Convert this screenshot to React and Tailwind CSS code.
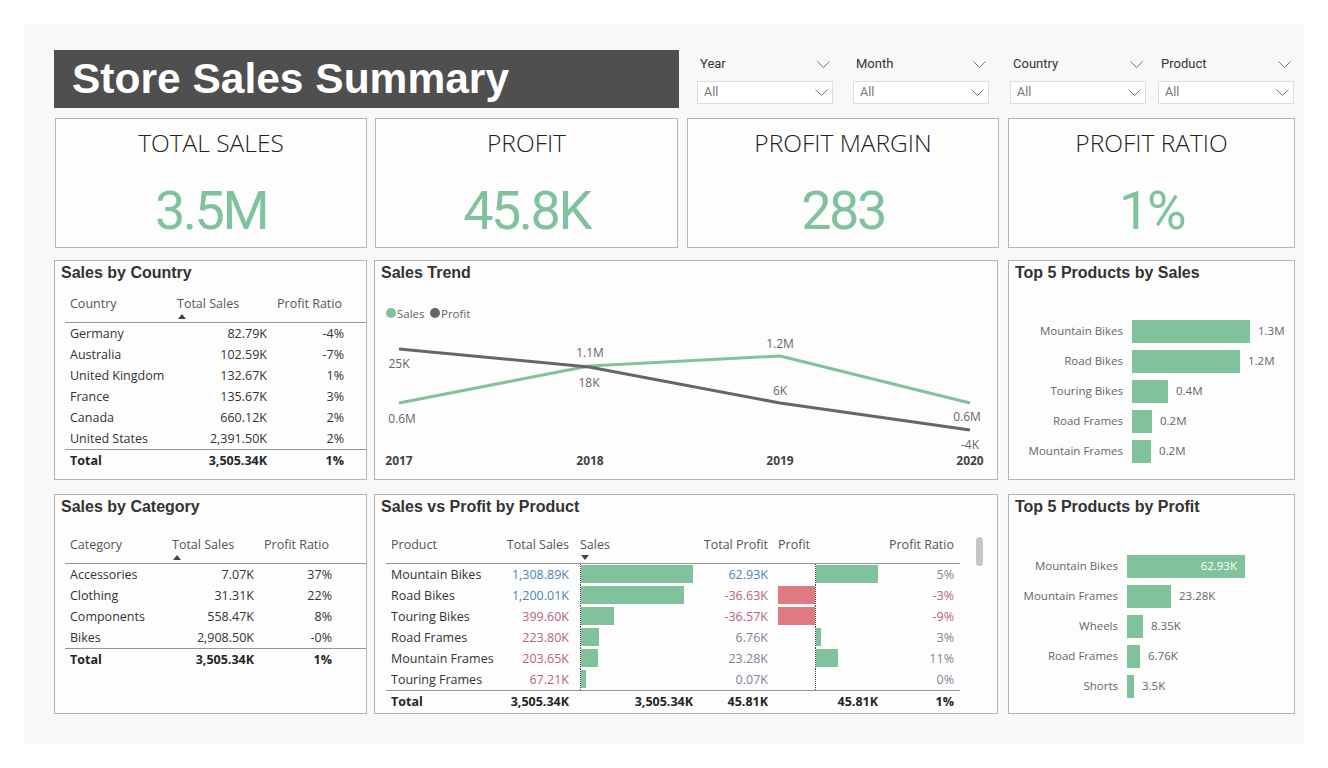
import React from "react";

const OPEN = "[font-family:'Open_Sans',sans-serif]";
const ROBOTO = "[font-family:Roboto,sans-serif]";
const LIB = "[font-family:'Liberation_Sans',Arial,sans-serif]";

const Chevron = ({ className = "" }) => (
  <svg width="13" height="7" viewBox="0 0 13 7" className={className}>
    <polyline points="0.5,0.5 6.5,6.5 12.5,0.5" fill="none" stroke="#777" strokeWidth="1" />
  </svg>
);

const SortUp = ({ className = "" }) => (
  <svg width="8" height="5" viewBox="0 0 8 5" className={className}>
    <path d="M0 5 L4 0 L8 5 Z" fill="#444" />
  </svg>
);

const SortDown = ({ className = "" }) => (
  <svg width="8" height="5" viewBox="0 0 8 5" className={className}>
    <path d="M0 0 L8 0 L4 5 Z" fill="#444" />
  </svg>
);

function Slicer({ label, className = "" }) {
  return (
    <div className={`w-[136px] ${className}`}>
      <div className="h-[20px] mt-[1px] flex items-center justify-between pl-[3px] pr-[3px]">
        <span className={`text-[13px] text-[#333] ${ROBOTO}`}>{label}</span>
        <Chevron />
      </div>
      <div className="mt-[7px] h-[23px] border border-[#dedede] bg-white flex items-center justify-between pl-[6px] pr-[4px]">
        <span className={`text-[12.5px] text-[#777] ${ROBOTO}`}>All</span>
        <Chevron />
      </div>
    </div>
  );
}

function Kpi({ title, value, className = "" }) {
  return (
    <div className={`h-[130px] border border-[#b4b4b4] bg-[#fdfdfd] flex flex-col items-center ${className}`}>
      <div className={`mt-[9px] text-[24.5px] leading-[30px] font-light text-[#222] ${OPEN}`}>{title}</div>
      <div className={`mt-[21px] text-[54px] leading-[64px] text-[#7fc29b] tracking-[-2.5px] ${ROBOTO}`}>{value}</div>
    </div>
  );
}

function Panel({ title, className = "", children }) {
  return (
    <div className={`relative h-[220px] border border-[#b4b4b4] bg-[#fdfdfd] ${className}`}>
      <div className={`pt-[3px] pl-[6px] text-[16px] leading-[18px] font-bold text-[#333] ${LIB}`}>{title}</div>
      {children}
    </div>
  );
}

function SimpleTable({ first, rows, total, w, className = "" }) {
  return (
    <div className={`ml-[10px] text-[12.5px] ${OPEN} ${className}`}>
      <div className="flex h-[28px] border-b border-[#959595] text-[#555]">
        <div className={`${w[0]} pl-[5px] leading-[18px]`}>{first}</div>
        <div className={`${w[1]} pl-[5px]`}>
          <div className="leading-[18px]">Total Sales</div>
          <SortUp className="ml-[1px] mt-[1px]" />
        </div>
        <div className={`${w[2]} pl-[5px] leading-[18px]`}>Profit Ratio</div>
      </div>
      {rows.map((r) => (
        <div key={r[0]} className="flex h-[21px] leading-[21px] text-[#333]">
          <div className={`${w[0]} pl-[5px]`}>{r[0]}</div>
          <div className={`${w[1]} pr-[5px] text-right`}>{r[1]}</div>
          <div className={`${w[2]} pr-[5px] text-right`}>{r[2]}</div>
        </div>
      ))}
      <div className="flex h-[22px] leading-[21px] border-t border-[#959595] font-bold text-[#252525]">
        <div className={`${w[0]} pl-[5px]`}>Total</div>
        <div className={`${w[1]} pr-[5px] text-right`}>{total[0]}</div>
        <div className={`${w[2]} pr-[5px] text-right`}>{total[1]}</div>
      </div>
    </div>
  );
}

const countries = [
  ["Germany", "82.79K", "-4%"],
  ["Australia", "102.59K", "-7%"],
  ["United Kingdom", "132.67K", "1%"],
  ["France", "135.67K", "3%"],
  ["Canada", "660.12K", "2%"],
  ["United States", "2,391.50K", "2%"],
];

const categories = [
  ["Accessories", "7.07K", "37%"],
  ["Clothing", "31.31K", "22%"],
  ["Components", "558.47K", "8%"],
  ["Bikes", "2,908.50K", "-0%"],
];

const BLUE = "text-[#4a86b8]";
const PINK = "text-[#b8647c]";
const GREY = "text-[#8a7d99]";

const products = [
  { name: "Mountain Bikes", sales: "1,308.89K", sc: BLUE, sw: 112, profit: "62.93K", pc: BLUE, pw: 62, ratio: "5%", rc: GREY },
  { name: "Road Bikes", sales: "1,200.01K", sc: BLUE, sw: 103, profit: "-36.63K", pc: PINK, pw: -37, ratio: "-3%", rc: PINK },
  { name: "Touring Bikes", sales: "399.60K", sc: PINK, sw: 33, profit: "-36.57K", pc: PINK, pw: -37, ratio: "-9%", rc: PINK },
  { name: "Road Frames", sales: "223.80K", sc: PINK, sw: 18, profit: "6.76K", pc: GREY, pw: 5, ratio: "3%", rc: GREY },
  { name: "Mountain Frames", sales: "203.65K", sc: PINK, sw: 17, profit: "23.28K", pc: GREY, pw: 22, ratio: "11%", rc: GREY },
  { name: "Touring Frames", sales: "67.21K", sc: PINK, sw: 5, profit: "0.07K", pc: GREY, pw: 0, ratio: "0%", rc: GREY },
];

function ProductTable() {
  return (
    <div className={`ml-[11px] mt-[20px] w-[574px] text-[12.5px] ${OPEN}`}>
      <div className="flex h-[28px] border-b border-[#959595] text-[#555]">
        <div className="w-[117px] pl-[5px] leading-[18px]">Product</div>
        <div className="w-[72px] pr-[6px] text-right leading-[18px]">Total Sales</div>
        <div className="w-[123px] pl-[5px]">
          <div className="leading-[18px]">Sales</div>
          <SortDown className="ml-[1px] mt-[1px]" />
        </div>
        <div className="w-[75px] pr-[5px] text-right leading-[18px]">Total Profit</div>
        <div className="w-[110px] pl-[5px] leading-[18px]">Profit</div>
        <div className="w-[77px] pr-[6px] text-right leading-[18px]">Profit Ratio</div>
      </div>
      {products.map((p) => (
        <div key={p.name} className="flex h-[21px] leading-[21px]">
          <div className="w-[117px] pl-[5px] text-[#333]">{p.name}</div>
          <div className={`w-[72px] pr-[6px] text-right ${p.sc}`}>{p.sales}</div>
          <div className="w-[123px] pl-[5px]">
            <div className="h-full border-l border-dotted border-[#444] flex items-start">
              <div className="mt-[1px] h-[18px] bg-[#7fc29b]" style={{ width: p.sw }} />
            </div>
          </div>
          <div className={`w-[75px] pr-[5px] text-right ${p.pc}`}>{p.profit}</div>
          <div className="w-[110px] pl-[5px] flex">
            <div className="w-[37px] h-full flex justify-end items-start">
              {p.pw < 0 && <div className="mt-[1px] h-[18px] bg-[#e07b83]" style={{ width: -p.pw }} />}
            </div>
            <div className="h-full border-l border-dotted border-[#444] flex items-start">
              {p.pw > 0 && <div className="mt-[1px] h-[18px] bg-[#7fc29b]" style={{ width: p.pw }} />}
            </div>
          </div>
          <div className={`w-[77px] pr-[6px] text-right ${p.rc}`}>{p.ratio}</div>
        </div>
      ))}
      <div className="flex h-[22px] leading-[21px] border-t border-[#959595] font-bold text-[#252525]">
        <div className="w-[117px] pl-[5px]">Total</div>
        <div className="w-[72px] pr-[6px] text-right">3,505.34K</div>
        <div className="w-[123px] pr-[5px] text-right">3,505.34K</div>
        <div className="w-[75px] pr-[5px] text-right">45.81K</div>
        <div className="w-[110px] pr-[5px] text-right">45.81K</div>
        <div className="w-[77px] pr-[6px] text-right">1%</div>
      </div>
    </div>
  );
}

function TrendChart() {
  const sales = "24,121 214,84 405,74 595,121";
  const profit = "24,67 214,85 405,121 595,148";
  const t = { fontFamily: "'Open Sans', sans-serif", fontSize: 12, fill: "#666", dominantBaseline: "central", textAnchor: "middle" };
  const labels = [
    ["25K", 24, 81],
    ["0.6M", 27, 136],
    ["1.1M", 215, 70],
    ["18K", 214, 100],
    ["1.2M", 405, 61],
    ["6K", 405, 108],
    ["0.6M", 592, 134],
    ["-4K", 595, 162],
  ];
  const years = [["2017", 24], ["2018", 215], ["2019", 405], ["2020", 595]];
  return (
    <svg width="622" height="197" className="block">
      <circle cx="16" cy="31" r="5" fill="#7fc29b" />
      <text x="22" y="31" {...t} textAnchor="start" fontSize="11.5">Sales</text>
      <circle cx="60" cy="31" r="5" fill="#666" />
      <text x="66" y="31" {...t} textAnchor="start" fontSize="11.5">Profit</text>
      <polyline points={sales} fill="none" stroke="#7fc29b" strokeWidth="3" strokeLinejoin="round" />
      <polyline points={profit} fill="none" stroke="#666" strokeWidth="3" strokeLinejoin="round" />
      {labels.map(([s, x, y], i) => (
        <text key={i} x={x} y={y} {...t}>{s}</text>
      ))}
      {years.map(([s, x]) => (
        <text key={s} x={x} y={178} {...t} fill="#444" fontWeight="700">{s}</text>
      ))}
    </svg>
  );
}

function BarChart({ items, labelW, className = "" }) {
  return (
    <div className={`flex flex-col text-[11.5px] ${OPEN} ${className}`}>
      {items.map((it) => (
        <div key={it.name} className="flex items-center h-[30px]">
          <div className={`${labelW} text-right text-[#666]`}>{it.name}</div>
          <div className="ml-[9px] h-[23px] bg-[#7fc29b] flex items-center justify-end" style={{ width: it.w }}>
            {it.inside && <span className="pr-[8px] text-white">{it.value}</span>}
          </div>
          {!it.inside && <span className="ml-[8px] text-[#666]">{it.value}</span>}
        </div>
      ))}
    </div>
  );
}

const topSales = [
  { name: "Mountain Bikes", w: 118, value: "1.3M" },
  { name: "Road Bikes", w: 108, value: "1.2M" },
  { name: "Touring Bikes", w: 36, value: "0.4M" },
  { name: "Road Frames", w: 20, value: "0.2M" },
  { name: "Mountain Frames", w: 19, value: "0.2M" },
];

const topProfit = [
  { name: "Mountain Bikes", w: 118, value: "62.93K", inside: true },
  { name: "Mountain Frames", w: 44, value: "23.28K" },
  { name: "Wheels", w: 16, value: "8.35K" },
  { name: "Road Frames", w: 13, value: "6.76K" },
  { name: "Shorts", w: 7, value: "3.5K" },
];

export default function App() {
  return (
    <div className="w-[1328px] h-[768px] bg-white pt-[24px] pl-[24px]">
      <div className="w-[1280px] h-[720px] bg-[#f8f8f8] pt-[26px] pl-[30px]">
        {/* header */}
        <div className="flex items-start">
          <div className={`w-[625px] h-[58px] bg-[#4f4f4f] flex items-center pl-[18px] text-white font-bold text-[42.5px] ${LIB}`}>
            Store Sales Summary
          </div>
          <div className="flex mt-[3px] ml-[18px]">
            <Slicer label="Year" />
            <Slicer label="Month" className="ml-[20px]" />
            <Slicer label="Country" className="ml-[21px]" />
            <Slicer label="Product" className="ml-[12px]" />
          </div>
        </div>

        {/* KPI cards */}
        <div className="flex mt-[10px]">
          <Kpi title="TOTAL SALES" value="3.5M" className="ml-[1px] w-[312px]" />
          <Kpi title="PROFIT" value="45.8K" className="ml-[8px] w-[303px]" />
          <Kpi title="PROFIT MARGIN" value="283" className="ml-[9px] w-[312px]" />
          <Kpi title="PROFIT RATIO" value="1%" className="ml-[9px] w-[287px]" />
        </div>

        {/* middle row */}
        <div className="flex mt-[12px]">
          <Panel title="Sales by Country" className="w-[313px]">
            <SimpleTable
              first="Country"
              rows={countries}
              total={["3,505.34K", "1%"]}
              w={["w-[107px]", "w-[100px]", "w-[77px]"]}
              className="mt-[13px]"
            />
          </Panel>
          <Panel title="Sales Trend" className="ml-[7px] w-[624px]">
            <TrendChart />
          </Panel>
          <Panel title="Top 5 Products by Sales" className="ml-[10px] w-[287px]">
            <BarChart items={topSales} labelW="w-[114px]" className="mt-[34px]" />
          </Panel>
        </div>

        {/* bottom row */}
        <div className="flex mt-[14px]">
          <Panel title="Sales by Category" className="w-[313px]">
            <SimpleTable
              first="Category"
              rows={categories}
              total={["3,505.34K", "1%"]}
              w={["w-[102px]", "w-[92px]", "w-[78px]"]}
              className="mt-[20px]"
            />
          </Panel>
          <Panel title="Sales vs Profit by Product" className="ml-[7px] w-[624px]">
            <ProductTable />
            <div className="absolute right-[14px] top-[42px] w-[7px] h-[29px] rounded-full bg-[#c6c6c6]" />
          </Panel>
          <Panel title="Top 5 Products by Profit" className="ml-[10px] w-[287px]">
            <BarChart items={topProfit} labelW="w-[109px]" className="mt-[35px]" />
          </Panel>
        </div>
      </div>
    </div>
  );
}
